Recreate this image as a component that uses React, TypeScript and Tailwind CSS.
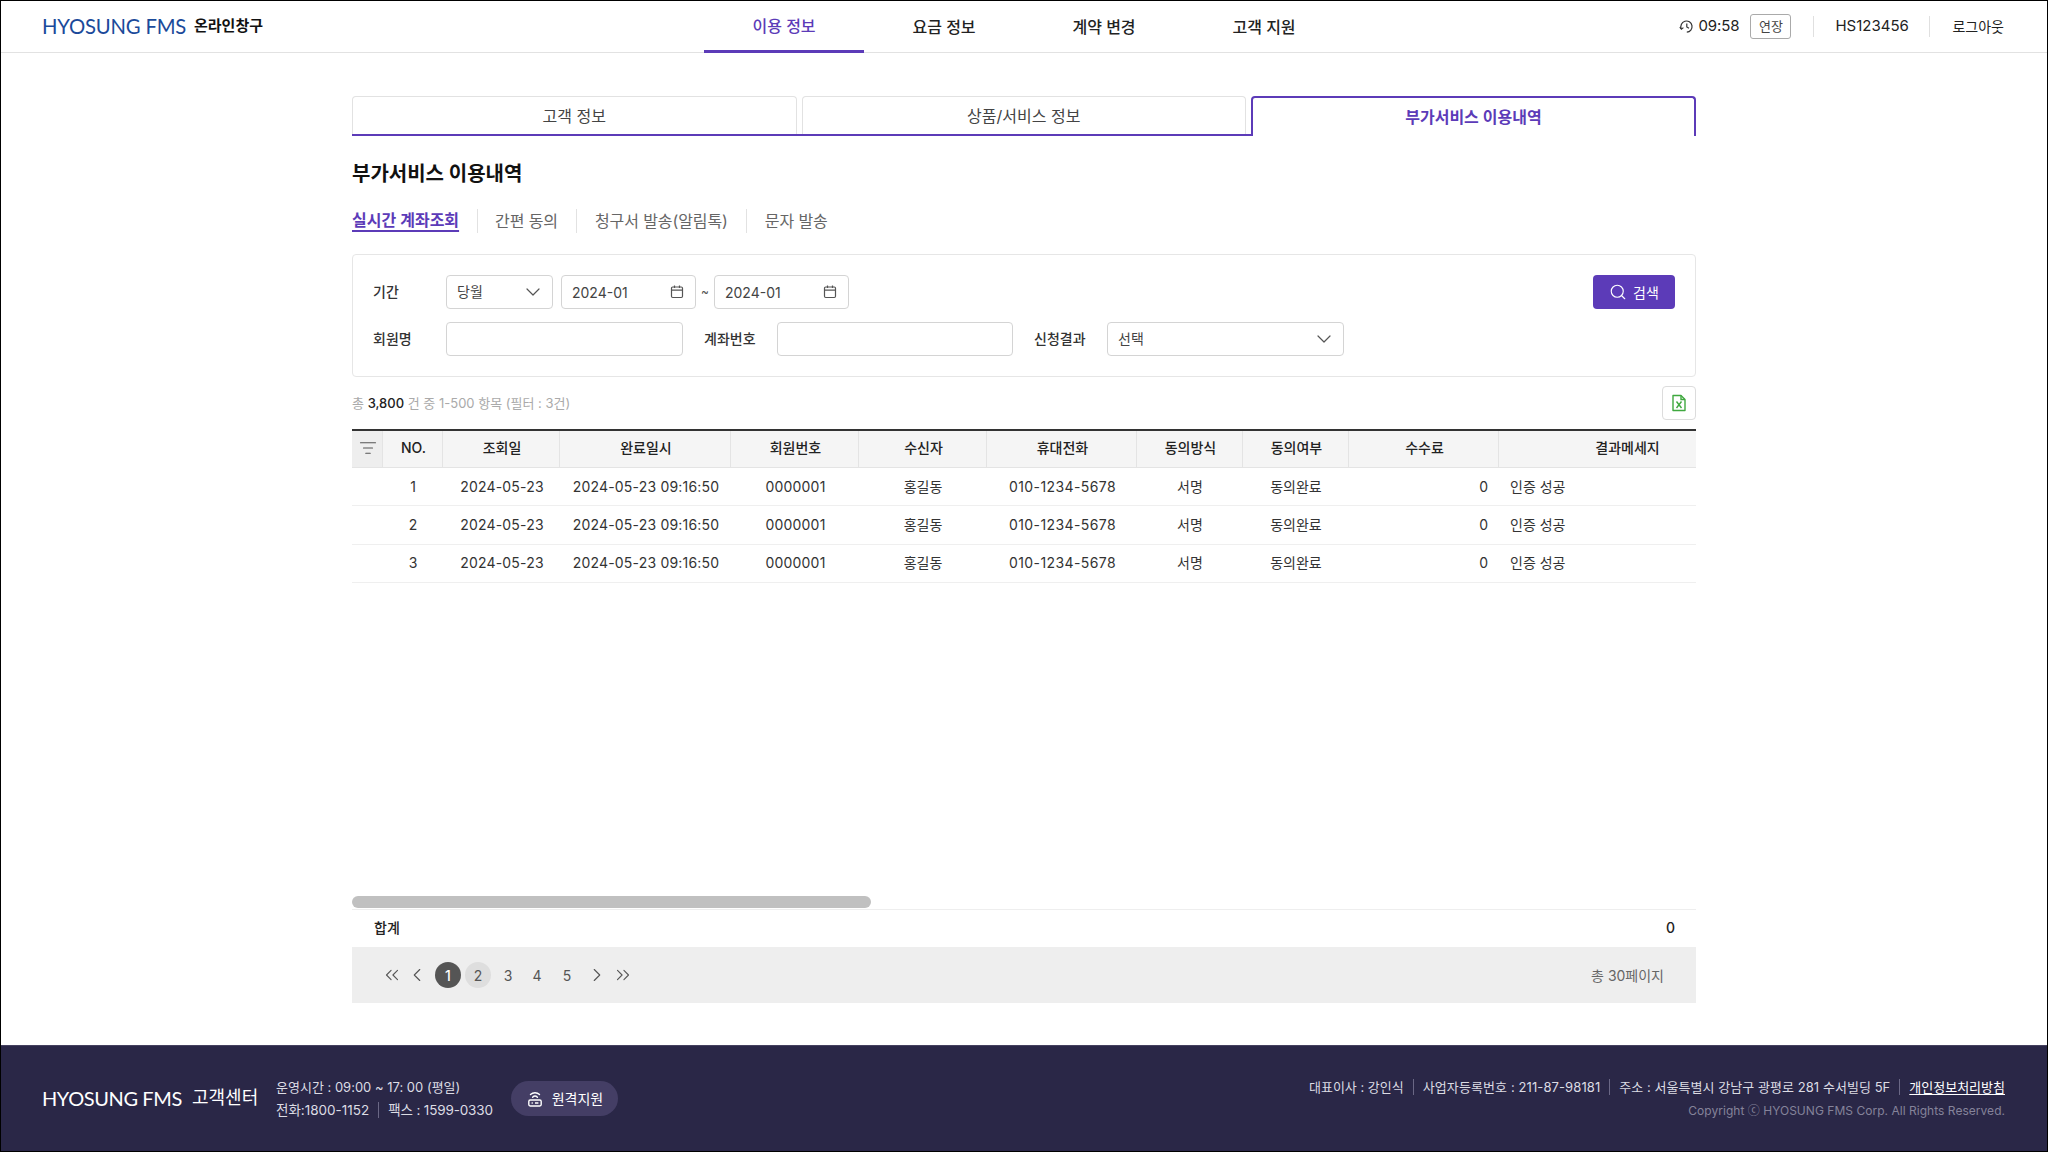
import React from 'react'
import { ChevronDown, ChevronLeft, ChevronRight, ChevronsLeft, ChevronsRight, ListFilter, Search } from 'lucide-react'

const navItems = ['이용 정보', '요금 정보', '계약 변경', '고객 지원']

const columns = [
  { label: 'NO.', w: 'w-[60px]' },
  { label: '조회일', w: 'w-[117px]' },
  { label: '완료일시', w: 'w-[171px]' },
  { label: '회원번호', w: 'w-[128px]' },
  { label: '수신자', w: 'w-[128px]' },
  { label: '휴대전화', w: 'w-[150px]' },
  { label: '동의방식', w: 'w-[106px]' },
  { label: '동의여부', w: 'w-[106px]' },
  { label: '수수료', w: 'w-[150px]' },
  { label: '결과메세지', w: 'w-[256px]' },
]

const rows = [1, 2, 3]

const CalendarIcon = () => (
  <svg width="16" height="16" viewBox="0 0 16 16" fill="none" stroke="#555" strokeWidth="1.2" className="shrink-0">
    <rect x="2.5" y="3" width="11" height="10.5" rx="1.2" />
    <path d="M2.5 6.2h11M5.5 1.5v2.6M10.5 1.5v2.6" />
  </svg>
)

const ExcelIcon = () => (
  <svg width="16" height="18" viewBox="0 0 16 18" fill="none" stroke="#3fa83f" strokeWidth="1.4">
    <path d="M2 1.5h8l4 4v11H2z" strokeLinejoin="round" />
    <path d="M10 1.5v4h4M5.5 7.5l5 6.5M10.5 7.5l-5 6.5" />
  </svg>
)

const ClockIcon = () => (
  <svg width="15" height="15" viewBox="0 0 15 15" fill="none" stroke="#333" strokeWidth="1.2" className="shrink-0">
    <path d="M2.3 9.8A5.6 5.6 0 1 1 7.8 13.2" />
    <path d="M.8 8.2l1.6 2 2-1.6" />
    <path d="M7.8 4.4v3.6l2.2 1.3" />
  </svg>
)

const RemoteIcon = () => (
  <svg width="18" height="18" viewBox="0 0 18 18" fill="none" stroke="#fff" strokeWidth="1.4">
    <path d="M4.5 4.6a6.4 6.4 0 0 1 9 0M6.6 7.2a3.4 3.4 0 0 1 4.8 0" strokeLinecap="round" />
    <rect x="2.8" y="10" width="12.4" height="6" rx="1.4" />
    <path d="M5.6 13h1.2M9 13h3.4" />
  </svg>
)

const Divider = ({ className }: { className: string }) => <span className={'w-px shrink-0 ' + className} />

const Header = () => (
  <header className="flex h-[52px] shrink-0 border-b border-[#e2e2e2]">
    <div className="flex w-[703px] items-center pl-[41px]">
      <span className="w-[152px] whitespace-nowrap font-['Lato',sans-serif] text-[20.3px] tracking-[-0.2px] text-[#1b4a9a]">HYOSUNG FMS</span>
      <span className="text-[15px] font-semibold text-[#111]">온라인창구</span>
    </div>
    <nav className="flex">
      {navItems.map((item, i) => (
        <div
          key={item}
          className={
            i === 0
              ? 'relative z-10 -mb-px flex w-[160px] items-center justify-center border-b-[3px] border-[#5c3bb8] pt-[1px] text-[16px] font-medium text-[#5c3bb8]'
              : 'flex w-[160px] items-center justify-center text-[16px] font-medium text-[#222]'
          }
        >
          {item}
        </div>
      ))}
    </nav>
    <div className="ml-auto flex items-center pr-[43px] text-[14px] text-[#222]">
      <ClockIcon />
      <span className="ml-[4px] text-[15px] tracking-[-0.1px]">09:58</span>
      <span className="ml-[11px] flex h-[25px] w-[41px] items-center justify-center rounded-[3px] border border-[#aaa] text-[13px] text-[#444]">연장</span>
      <Divider className="ml-[22px] h-[21px] bg-[#e0e0e0]" />
      <span className="ml-[21px] w-[72px] text-[15px]">HS123456</span>
      <Divider className="ml-[22px] h-[21px] bg-[#e0e0e0]" />
      <span className="ml-[22px]">로그아웃</span>
    </div>
  </header>
)

const Tabs = () => (
  <div className="flex h-[40px]">
    <div className="flex flex-1 gap-[5px] border-b-2 border-[#5c3bb8] pr-[5px]">
      {['고객 정보', '상품/서비스 정보'].map((t) => (
        <div key={t} className="flex flex-1 items-center justify-center rounded-t-[4px] border border-b-0 border-[#e2e2e2] pt-[1px] text-[16px] text-[#444]">
          {t}
        </div>
      ))}
    </div>
    <div className="flex w-[445px] items-center justify-center rounded-t-[4px] border-2 border-b-0 border-[#5c3bb8] text-[16px] font-semibold text-[#5c3bb8]">
      부가서비스 이용내역
    </div>
  </div>
)

const SubTabs = () => (
  <div className="mt-[21px] flex h-[24px] items-stretch text-[16px] tracking-[-0.1px] text-[#666]">
    <span className="font-semibold leading-[22px] tracking-normal text-[#5c3bb8] underline decoration-[2px] underline-offset-[4px]">실시간 계좌조회</span>
    <Divider className="mr-[17px] ml-[18px] bg-[#e2e2e2]" />
    <span className="leading-[24px]">간편 동의</span>
    <Divider className="mx-[18px] bg-[#e2e2e2]" />
    <span className="leading-[24px]">청구서 발송(알림톡)</span>
    <Divider className="mx-[18px] bg-[#e2e2e2]" />
    <span className="leading-[24px]">문자 발송</span>
  </div>
)

const Field = ({ className, children }: { className: string; children?: React.ReactNode }) => (
  <div className={'flex h-[34px] items-center justify-between rounded-[4px] border border-[#d4d4d4] bg-white px-[10px] text-[14px] text-[#444] ' + className}>
    {children}
  </div>
)

const Filters = () => (
  <div className="mt-[21px] flex h-[123px] flex-col gap-[13px] rounded-[4px] border border-[#e6e6e6] px-[20px] pt-[20px]">
    <div className="flex items-center">
      <span className="w-[73px] pb-[1px] text-[14px] font-medium text-[#333]">기간</span>
      <Field className="w-[107px]">
        <span className="pb-[1px]">당월</span>
        <ChevronDown size={24} strokeWidth={1.2} className="-mr-[3px] text-[#555]" />
      </Field>
      <Field className="ml-[8px] w-[135px]">
        2024-01
        <CalendarIcon />
      </Field>
      <span className="w-[18px] text-center text-[12px] text-[#555]">~</span>
      <Field className="w-[135px]">
        2024-01
        <CalendarIcon />
      </Field>
      <button className="ml-auto flex h-[34px] w-[82px] items-center justify-center gap-[6px] rounded-[4px] bg-[#5c3bb8] text-[14px] text-white">
        <Search size={18} strokeWidth={1.5} />
        검색
      </button>
    </div>
    <div className="flex items-center">
      <span className="w-[73px] pb-[2px] text-[14px] font-medium text-[#333]">회원명</span>
      <Field className="w-[237px]" />
      <span className="ml-[21px] w-[73px] pb-[2px] text-[14px] font-medium text-[#333]">계좌번호</span>
      <Field className="w-[236px]" />
      <span className="ml-[21px] w-[73px] pb-[2px] text-[14px] font-medium text-[#333]">신청결과</span>
      <Field className="w-[237px]">
        <span className="pb-[2px]">선택</span>
        <ChevronDown size={24} strokeWidth={1.2} className="-mr-[3px] text-[#555]" />
      </Field>
    </div>
  </div>
)

const cell = 'border-b border-[#efefef] pb-[1px]'

const ResultTable = () => (
  <div className="mt-[9px] h-[467px] overflow-hidden border-t-2 border-[#333]">
    <table className="w-[1403px] table-fixed border-separate border-spacing-0 text-[14px]">
      <thead>
        <tr className="h-[37px] bg-[#f5f5f5] font-medium text-[#222]">
          <th className="w-[31px] border-r border-b border-[#e4e4e4] bg-[#eeeeee] p-0 pb-[2px] pl-[2px] font-normal">
            <ListFilter size={18} strokeWidth={1.5} className="mx-auto text-[#555]" />
          </th>
          {columns.map((c) => (
            <th key={c.label} className={c.w + ' border-r border-b border-[#e4e4e4] p-0 pb-[3px] pl-[2px] font-medium'}>
              {c.label}
            </th>
          ))}
        </tr>
      </thead>
      <tbody className="text-center text-[#333]">
        {rows.map((n) => (
          <tr key={n} className="h-[38.4px]">
            <td className={cell} />
            <td className={cell}>{n}</td>
            <td className={cell + ' pl-[1px] tracking-[0.2px]'}>2024-05-23</td>
            <td className={cell + ' pl-[1px] tracking-[0.2px]'}>2024-05-23 09:16:50</td>
            <td className={cell + ' pl-[1px] tracking-[0.2px]'}>0000001</td>
            <td className={cell}>홍길동</td>
            <td className={cell + ' pl-[1px] tracking-[0.4px]'}>010-1234-5678</td>
            <td className={cell}>서명</td>
            <td className={cell}>동의완료</td>
            <td className={cell + ' pr-[11px] text-right'}>0</td>
            <td className={cell + ' pl-[11px] text-left'}>인증 성공</td>
          </tr>
        ))}
      </tbody>
    </table>
  </div>
)

const Pagination = () => (
  <div className="flex h-[56px] items-center bg-[#eeeeee] pr-[32px] pl-[29px] text-[14px] text-[#555]">
    <ChevronsLeft size={22} strokeWidth={1.2} />
    <ChevronLeft size={22} strokeWidth={1.2} className="ml-[3px]" />
    <span className="ml-[7px] flex h-[26px] w-[26px] items-center justify-center rounded-full bg-[#555] font-medium text-white">1</span>
    <span className="ml-[4px] flex h-[26px] w-[26px] items-center justify-center rounded-full bg-[#dedede]">2</span>
    <span className="ml-[4px] flex w-[26px] justify-center">3</span>
    <span className="ml-[3px] flex w-[26px] justify-center">4</span>
    <span className="ml-[4px] flex w-[26px] justify-center">5</span>
    <ChevronRight size={22} strokeWidth={1.2} className="ml-[6px]" />
    <ChevronsRight size={22} strokeWidth={1.2} className="ml-[4px]" />
    <span className="ml-auto text-[#666]">총 30페이지</span>
  </div>
)

const Footer = () => (
  <footer className="flex h-[106px] shrink-0 items-center justify-between border-t border-[#45415f] bg-[#2a2747] pr-[42px] pl-[41px] text-[14px] text-[#dcdce4]">
    <div className="flex items-center">
      <span className="w-[150px] whitespace-nowrap pb-[2px] font-['Lato',sans-serif] text-[20px] tracking-[-0.4px] text-white">HYOSUNG FMS</span>
      <span className="w-[84px] pb-[2px] text-[18px] text-white">고객센터</span>
      <div className="flex w-[218px] flex-col gap-[3px] leading-[20px]">
        <span className="text-[13px]">운영시간 : 09:00 ~ 17: 00 (평일)</span>
        <span className="flex items-center text-[13.5px]">
          전화:1800-1152
          <Divider className="mx-[9px] h-[16px] bg-[#6a6785]" />
          <span className="tracking-[-0.15px]">팩스 : 1599-0330</span>
        </span>
      </div>
      <div className="ml-[17px] flex h-[35px] w-[107px] items-center justify-center gap-[8px] rounded-full bg-[#443e65] text-white">
        <RemoteIcon />
        원격지원
      </div>
    </div>
    <div className="flex flex-col items-end gap-[4px] leading-[20px]">
      <div className="flex items-center text-[13px]">
        대표이사 : 강인식
        <Divider className="mx-[9px] h-[16px] bg-[#6a6785]" />
        <span className="tracking-[0.1px]">사업자등록번호 : 211-87-98181</span>
        <Divider className="mx-[9px] h-[16px] bg-[#6a6785]" />
        <span className="tracking-[0.05px]">주소 : 서울특별시 강남구 광평로 281 수서빌딩 5F</span>
        <Divider className="mx-[9px] h-[16px] bg-[#6a6785]" />
        <span className="text-white underline underline-offset-2">개인정보처리방침</span>
      </div>
      <span className="text-[12px] tracking-[0.03px] text-[#85839a]">Copyright ⓒ HYOSUNG FMS Corp. All Rights Reserved.</span>
    </div>
  </footer>
)

export default function App() {
  return (
    <div className="flex h-[1152px] flex-col border border-black bg-white [font-family:Inter,'Noto_Sans_CJK_KR',sans-serif]">
      <Header />
      <main className="mx-auto w-[1344px] flex-1 pt-[43px]">
        <Tabs />
        <h1 className="mt-[24px] text-[20px] leading-[28px] font-bold text-[#111]">부가서비스 이용내역</h1>
        <SubTabs />
        <Filters />
        <div className="mt-[9px] flex h-[34px] items-center justify-between">
          <span className="pt-[2px] text-[13px] text-[#aaa]">
            총 <span className="font-medium text-[#222]">3,800</span> 건 중 1-500 항목 (필터 : 3건)
          </span>
          <span className="flex h-[34px] w-[34px] items-center justify-center rounded-[4px] border border-[#dcdcdc]">
            <ExcelIcon />
          </span>
        </div>
        <ResultTable />
        <div className="h-[12px] w-[519px] rounded-full bg-[#c0c0c0]" />
        <div className="mt-[1px] flex h-[38px] items-center justify-between border-t border-[#eeeeee] pr-[21px] pb-[2px] pl-[22px] text-[14px] font-medium text-[#222]">
          <span>합계</span>
          <span>0</span>
        </div>
        <Pagination />
      </main>
      <Footer />
    </div>
  )
}
